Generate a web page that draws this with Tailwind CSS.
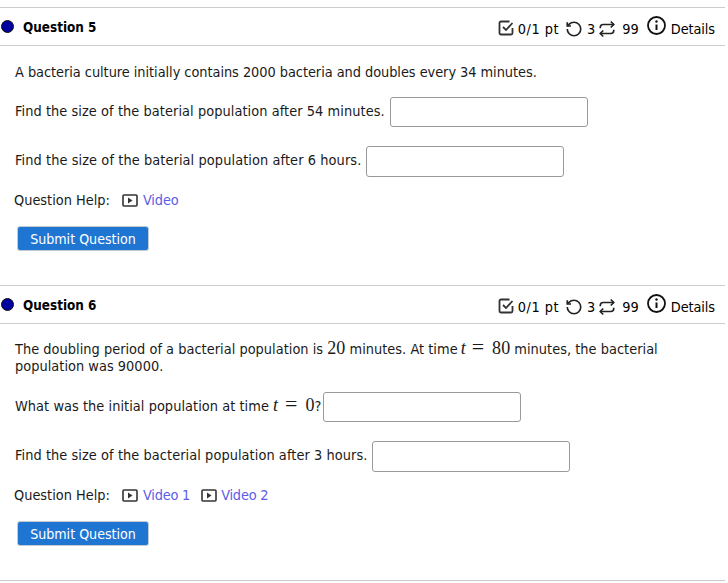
<!DOCTYPE html>
<html><head><meta charset="utf-8"><script src="https://cdn.jsdelivr.net/npm/@tailwindcss/browser@4"></script></head>
<body class="bg-white">
<div class="w-[725px] h-[583px] overflow-hidden pt-[7px] text-[14.4px] leading-[17px] text-[#1a1a1a] font-['DejaVu_Sans_Condensed','DejaVu_Sans',sans-serif]">

<section class="h-[278px]">
  <div class="h-[39px] border-y border-[#cccccc] flex items-center pl-[1px] pr-[10px]">
    <span class="w-[13px] h-[13px] rounded-full bg-[#0000a0] border border-[#111]"></span>
    <h2 class="ml-[9px] mt-[1px] font-bold text-black text-[13.4px]">Question 5</h2>
    <div class="ml-auto flex items-center text-black">
      <svg class="w-[16px] h-[16px] mr-[4px] mt-[2px]" viewBox="0 0 16 16" fill="none" stroke="#333" stroke-width="1.8"><path d="M14.500 8v5a1.500 1.500 0 0 1-1.500 1.500H3A1.500 1.500 0 0 1 1.500 13V3A1.500 1.500 0 0 1 3 1.500h8.500"/><path d="M5 7l3 3 6.500-7"/></svg>
      <span class="mt-[6px] tracking-[0.5px]">0/1 pt</span>
      <svg class="w-[18px] h-[18px] ml-[6px] mr-[4px] mt-[4px]" viewBox="0 0 24 24" fill="none" stroke="#222" stroke-width="2.200"><path d="M3 12a9 9 0 1 0 9-9 9.750 9.750 0 0 0-6.740 2.740L3 8"/><path d="M3 3v5h5"/></svg>
      <span class="mt-[6px]">3</span>
      <svg class="w-[18px] h-[18px] ml-[3px] mr-[6px] mt-[4px]" viewBox="0 0 24 24" fill="none" stroke="#222" stroke-width="2.200"><path d="m17 2 4 4-4 4"/><path d="M3 11v-1a4 4 0 0 1 4-4h14"/><path d="m7 22-4-4 4-4"/><path d="M21 13v1a4 4 0 0 1-4 4H3"/></svg>
      <span class="mt-[6px]">99</span>
      <svg class="w-[19px] h-[19px] ml-[8px] mr-[5px] -mt-[2px]" viewBox="0 0 19 19" fill="none" stroke="#111" stroke-width="1.800"><circle cx="9.500" cy="9.500" r="8.500"/><path d="M9.500 8.500v5.500" stroke-width="2"/><circle cx="9.500" cy="5.500" r="1.200" fill="#111" stroke="none"/></svg>
      <span class="mt-[6px] tracking-[-0.1px]">Details</span>
    </div>
  </div>
  <div class="pl-[15px] pt-[18px]">
    <p class="tracking-[-0.04px]">A bacteria culture initially contains 2000 bacteria and doubles every 34 minutes.</p>
    <div class="mt-[16px] flex items-center gap-[5px] tracking-[0.07px]"><span class="pb-[2px]">Find the size of the baterial population after 54 minutes.</span><span class="w-[198px] h-[30px] border border-[#999] rounded-[3px]"></span></div>
    <div class="mt-[19px] flex items-center gap-[5px] tracking-[0.09px]"><span class="pb-[2px]">Find the size of the baterial population after 6 hours.</span><span class="w-[198px] h-[31px] border border-[#999] rounded-[3px]"></span></div>
    <div class="mt-[15px] -ml-px flex items-center">
      <span>Question Help:</span>
      <svg class="w-[16px] h-[13px] ml-[12px] mr-[5px]" viewBox="0 0 16 13" fill="none"><rect x="1" y="1" width="14" height="11" rx="1" stroke="#333" stroke-width="1.600"/><path d="M6 3.500v6l4.500-3z" fill="#333"/></svg>
      <a class="text-[#5c5ce6] tracking-[-0.1px]">Video</a>
    </div>
    <button class="block mt-[17px] ml-[2px] w-[132px] h-[25px] pt-[1px] bg-[#1f76d2] border border-[#c4cad2] rounded-[3px] text-white text-[14.1px]">Submit Question</button>
  </div>
</section>

<section class="h-[296px]">
  <div class="h-[39px] border-y border-[#cccccc] flex items-center pl-[1px] pr-[10px]">
    <span class="w-[13px] h-[13px] rounded-full bg-[#0000a0] border border-[#111]"></span>
    <h2 class="ml-[9px] mt-[1px] font-bold text-black text-[13.4px]">Question 6</h2>
    <div class="ml-auto flex items-center text-black">
      <svg class="w-[16px] h-[16px] mr-[4px] mt-[2px]" viewBox="0 0 16 16" fill="none" stroke="#333" stroke-width="1.8"><path d="M14.500 8v5a1.500 1.500 0 0 1-1.500 1.500H3A1.500 1.500 0 0 1 1.500 13V3A1.500 1.500 0 0 1 3 1.500h8.500"/><path d="M5 7l3 3 6.500-7"/></svg>
      <span class="mt-[6px] tracking-[0.5px]">0/1 pt</span>
      <svg class="w-[18px] h-[18px] ml-[6px] mr-[4px] mt-[4px]" viewBox="0 0 24 24" fill="none" stroke="#222" stroke-width="2.200"><path d="M3 12a9 9 0 1 0 9-9 9.750 9.750 0 0 0-6.740 2.740L3 8"/><path d="M3 3v5h5"/></svg>
      <span class="mt-[6px]">3</span>
      <svg class="w-[18px] h-[18px] ml-[3px] mr-[6px] mt-[4px]" viewBox="0 0 24 24" fill="none" stroke="#222" stroke-width="2.200"><path d="m17 2 4 4-4 4"/><path d="M3 11v-1a4 4 0 0 1 4-4h14"/><path d="m7 22-4-4 4-4"/><path d="M21 13v1a4 4 0 0 1-4 4H3"/></svg>
      <span class="mt-[6px]">99</span>
      <svg class="w-[19px] h-[19px] ml-[8px] mr-[5px] -mt-[2px]" viewBox="0 0 19 19" fill="none" stroke="#111" stroke-width="1.800"><circle cx="9.500" cy="9.500" r="8.500"/><path d="M9.500 8.500v5.500" stroke-width="2"/><circle cx="9.500" cy="5.500" r="1.200" fill="#111" stroke="none"/></svg>
      <span class="mt-[6px] tracking-[-0.1px]">Details</span>
    </div>
  </div>
  <div class="pl-[15px] pt-[14px]">
    <p class="w-[670px] tracking-[0.03px]">The doubling period of a bacterial population is <span class="font-['Liberation_Serif',serif] text-[18px] leading-[17px]">20</span> minutes. At time<i class="font-['Liberation_Serif',serif] text-[18px] leading-[17px] ml-[3px] mr-[6px]">t</i><span class="font-['Liberation_Serif',serif] text-[22px] leading-[17px] mr-[8px]">=</span><span class="font-['Liberation_Serif',serif] text-[18px] leading-[17px]">80</span> minutes, the bacterial population was 90000.</p>
    <div class="mt-[17px] flex items-center gap-[2px] tracking-[0.05px]"><span class="pb-[4px]">What was the initial population at time<i class="font-['Liberation_Serif',serif] text-[18px] leading-[17px] ml-[4px] mr-[7px]">t</i><span class="font-['Liberation_Serif',serif] text-[22px] leading-[17px] mr-[8px]">=</span><span class="font-['Liberation_Serif',serif] text-[18px] leading-[17px]">0</span>?</span><span class="w-[198px] h-[30px] border border-[#999] rounded-[3px]"></span></div>
    <div class="mt-[19px] flex items-center gap-[5px] tracking-[0.07px]"><span class="pb-[2px]">Find the size of the bacterial population after 3 hours.</span><span class="w-[198px] h-[31px] border border-[#999] rounded-[3px]"></span></div>
    <div class="mt-[15px] -ml-px flex items-center">
      <span>Question Help:</span>
      <svg class="w-[16px] h-[13px] ml-[12px] mr-[5px]" viewBox="0 0 16 13" fill="none"><rect x="1" y="1" width="14" height="11" rx="1" stroke="#333" stroke-width="1.600"/><path d="M6 3.500v6l4.500-3z" fill="#333"/></svg>
      <a class="text-[#5c5ce6] tracking-[-0.2px]">Video 1</a>
      <svg class="w-[16px] h-[13px] ml-[11px] mr-[4px]" viewBox="0 0 16 13" fill="none"><rect x="1" y="1" width="14" height="11" rx="1" stroke="#333" stroke-width="1.600"/><path d="M6 3.500v6l4.500-3z" fill="#333"/></svg>
      <a class="text-[#5c5ce6] tracking-[-0.2px]">Video 2</a>
    </div>
    <button class="block mt-[17px] ml-[2px] w-[132px] h-[25px] pt-[1px] bg-[#1f76d2] border border-[#c4cad2] rounded-[3px] text-white text-[14.1px]">Submit Question</button>
  </div>
  <div class="border-t border-[#cccccc] mt-[34px]"></div>
</section>
</div>
</body></html>
